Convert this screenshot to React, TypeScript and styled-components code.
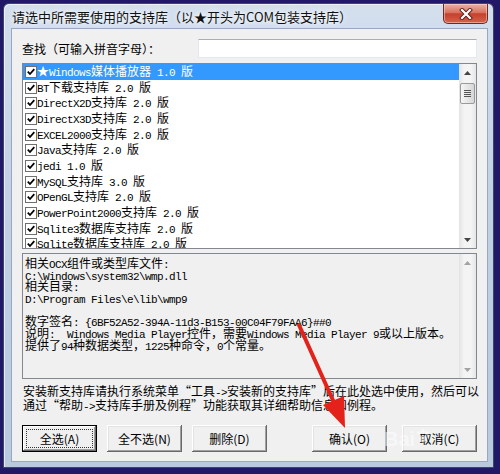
import React from "react";
import styled, { createGlobalStyle } from "styled-components";

const GlobalStyle = createGlobalStyle`
  html, body { margin: 0; padding: 0; }
  body {
    background: #211968;
    width: 500px;
    height: 474px;
    overflow: hidden;
    font-family: "Noto Sans CJK SC", "Noto Sans", sans-serif;
  }
`;

const items = [
  "★Windows媒体播放器 1.0 版",
  "BT下载支持库 2.0 版",
  "DirectX2D支持库 2.0 版",
  "DirectX3D支持库 2.0 版",
  "EXCEL2000支持库 2.0 版",
  "Java支持库 2.0 版",
  "jedi 1.0 版",
  "MySQL支持库 3.0 版",
  "OPenGL支持库 2.0 版",
  "PowerPoint2000支持库 2.0 版",
  "Sqlite3数据库支持库 2.0 版",
  "Sqlite数据库支持库 2.0 版",
];

const details = [
  "相关OCX组件或类型库文件:",
  "C:\\Windows\\system32\\wmp.dll",
  "相关目录:",
  "D:\\Program Files\\e\\lib\\wmp9",
  "",
  "数字签名: {6BF52A52-394A-11d3-B153-00C04F79FAA6}##0",
  "说明:  Windows Media Player控件，需要Windows Media Player 9或以上版本。",
  "提供了94种数据类型，1225种命令，0个常量。",
];

// ascii runs go in a mono face squeezed to 6px a char, like NSimSun's half-width glyphs
const Latin = styled.span`
  font-family: "Liberation Mono", monospace;
  font-size: 11px;
  letter-spacing: -0.6px;
`;

const Mixed = ({ text }: { text: string }) => {
  const runs = text.match(/[\x20-\x7e]+|[^\x20-\x7e]+/g) ?? [];
  return (
    <>
      {runs.map((run, i) =>
        /^[\x20-\x7e]/.test(run) ? <Latin key={i}>{run}</Latin> : <span key={i}>{run}</span>
      )}
    </>
  );
};

const Page = styled.div`
  position: relative;
  box-sizing: border-box;
  width: 500px;
  height: 474px;
  padding: 3px 6px 6px 3px;
  background: #211968;
`;

const Window = styled.div`
  box-sizing: border-box;
  height: 100%;
  display: flex;
  flex-direction: column;
  padding: 0 5px 5px 7px;
  border: 1px solid #3b4868;
  border-radius: 6px 6px 0 0;
  background: linear-gradient(180deg, #d3dfed 0%, #c2d1e4 40%, #b9c9de 100%);
  box-shadow: inset 1px 1px 0 rgba(255, 255, 255, 0.6);
`;

const TitleBar = styled.div`
  height: 28px;
  display: flex;
  justify-content: space-between;
  align-items: flex-start;
`;

const Title = styled.div`
  padding: 5px 0 0 1px;
  font-size: 13px;
  line-height: 16px;
  color: #111;
  white-space: nowrap;
  text-shadow: 0 0 8px #ffffff, 0 0 4px #ffffff;
`;

const CloseButton = styled.div`
  box-sizing: border-box;
  width: 45px;
  height: 20px;
  display: flex;
  align-items: center;
  justify-content: center;
  border: 1px solid #6a2b24;
  border-top: none;
  border-radius: 0 0 5px 5px;
  background: linear-gradient(180deg, #eab3a5 0%, #d8725e 45%, #c4412d 52%, #d4644c 100%);
  box-shadow: inset 0 0 0 1px rgba(255, 220, 210, 0.5);
`;

const Client = styled.div`
  flex: 1;
  display: flex;
  flex-direction: column;
  padding: 10px 10px 9px 10px;
  border: 1px solid #97a8c0;
  background: #f0f0f0;
  font-size: 12px;
  color: #000;
`;

const SearchRow = styled.div`
  height: 19px;
  display: flex;
  justify-content: space-between;
  align-items: center;
`;

const Label = styled.span`
  font-size: 12px;
  line-height: 19px;
`;

const SearchInput = styled.div`
  box-sizing: border-box;
  width: 279px;
  height: 19px;
  background: #fff;
  border: 1px solid #e3e9ef;
  border-top-color: #abadb3;
`;

const Box = styled.div<{ $height: number; $gray?: boolean }>`
  box-sizing: border-box;
  height: ${(p) => p.$height}px;
  display: flex;
  border: 1px solid #828790;
  background: ${(p) => (p.$gray ? "#f0f0f0" : "#ffffff")};
  overflow: hidden;
`;

const ListBox = styled(Box)`
  margin-top: 5px;
`;

const DetailBox = styled(Box)`
  margin-top: 4px;
`;

const Rows = styled.div`
  flex: 1;
  overflow: hidden;
`;

const Row = styled.div<{ $selected?: boolean }>`
  height: 15.7px;
  display: flex;
  align-items: center;
  padding-left: 2px;
  white-space: pre;
  font-size: 12px;
  background: ${(p) => (p.$selected ? "#3399ff" : "transparent")};
  color: ${(p) => (p.$selected ? "#ffffff" : "#000000")};
`;

const RowText = styled.span`
  line-height: 15px;
`;

const Check = styled.span`
  box-sizing: border-box;
  width: 12px;
  height: 12px;
  flex: none;
  display: flex;
  align-items: center;
  justify-content: center;
  background: #fff;
  border: 1px solid #6f6f6f;
`;

const ScrollBar = styled.div`
  width: 17px;
  flex: none;
  display: flex;
  flex-direction: column;
  background: linear-gradient(90deg, #e3e3e3 0%, #f4f4f4 30%, #f4f4f4 70%, #e6e6e6 100%);
`;

const ScrollArrow = styled.div`
  height: 17px;
  display: flex;
  align-items: center;
  justify-content: center;
`;

const Thumb = styled.div`
  box-sizing: border-box;
  height: 21px;
  margin: 2px 1px 0;
  display: flex;
  align-items: center;
  justify-content: center;
  border: 1px solid #9a9a9a;
  border-radius: 2px;
  background: linear-gradient(90deg, #f5f5f5 0%, #e6e6e6 50%, #d6d6d6 100%);
`;

const Track = styled.div`
  flex: 1;
`;

const DetailText = styled.div`
  flex: 1;
  padding: 3px 2px 0;
  font-size: 12px;
  line-height: 11.7px;
  white-space: pre;
`;

const Line = styled.div`
  height: 11.7px;
`;

const Hint = styled.div`
  margin-top: 6px;
  padding-left: 1px;
  font-size: 12px;
  line-height: 12px;
  white-space: pre;
`;

const ButtonRow = styled.div`
  margin-top: 12px;
  display: flex;
  justify-content: space-between;
`;

const ButtonGroup = styled.div<{ $gap: number }>`
  display: flex;
  gap: ${(p) => p.$gap}px;
`;

const Button = styled.div<{ $focused?: boolean }>`
  position: relative;
  box-sizing: border-box;
  width: 75px;
  height: 27px;
  display: flex;
  align-items: center;
  justify-content: center;
  font-size: 12px;
  color: #000;
  background: #f0f0f0;
  box-shadow: ${(p) =>
    p.$focused
      ? "inset 0 0 0 1px #000, inset -2px -2px #696969, inset 2px 2px #fff, inset -3px -3px #a0a0a0"
      : "inset -1px -1px #696969, inset 1px 1px #fff, inset -2px -2px #a0a0a0, inset 2px 2px #e3e3e3"};

  &::after {
    content: "";
    display: ${(p) => (p.$focused ? "block" : "none")};
    position: absolute;
    inset: 4px;
    border: 1px dotted #333;
  }
`;

const Overlay = styled.svg`
  position: absolute;
  left: 0;
  top: 0;
  pointer-events: none;
`;

const Watermark = styled.div`
  position: absolute;
  left: 384px;
  top: 428px;
  display: flex;
  align-items: flex-start;
  font-family: "Liberation Sans", sans-serif;
  font-size: 20px;
  font-weight: 700;
  color: rgba(255, 255, 255, 0.5);
  pointer-events: none;
`;

const Arrow = ({ up, disabled }: { up: boolean; disabled?: boolean }) => (
  <svg width="7" height="4" viewBox="0 0 7 4">
    <path d={up ? "M0 4 L3.5 0 L7 4 Z" : "M0 0 L3.5 4 L7 0 Z"} fill={disabled ? "#a3a3a3" : "#444"} />
  </svg>
);

const Scroll = ({ thumb, disabled }: { thumb?: boolean; disabled?: boolean }) => (
  <ScrollBar>
    <ScrollArrow>
      <Arrow up disabled={disabled} />
    </ScrollArrow>
    {thumb && (
      <Thumb>
        <svg width="7" height="7" viewBox="0 0 7 7">
          <path d="M0 0.5H7M0 2.5H7M0 4.5H7M0 6.5H7" stroke="#555" strokeWidth="1" />
        </svg>
      </Thumb>
    )}
    <Track />
    <ScrollArrow>
      <Arrow up={false} disabled={disabled} />
    </ScrollArrow>
  </ScrollBar>
);

const CheckMark = () => (
  <svg width="8" height="8" viewBox="0 0 8 8">
    <path d="M0.8 3.6 L3 6 L7.3 1.2" fill="none" stroke="#000" strokeWidth="1.8" />
  </svg>
);

export default function App() {
  return (
    <Page>
      <GlobalStyle />
      <Window>
        <TitleBar>
          <Title>请选中所需要使用的支持库（以★开头为COM包装支持库）</Title>
          <CloseButton>
            <svg width="14" height="12" viewBox="0 0 14 12">
              <path d="M3 2 L11 10 M11 2 L3 10" stroke="#5a1d16" strokeWidth="4" strokeLinecap="square" />
              <path d="M3 2 L11 10 M11 2 L3 10" stroke="#fff" strokeWidth="2.2" strokeLinecap="square" />
            </svg>
          </CloseButton>
        </TitleBar>
        <Client>
          <SearchRow>
            <Label>查找（可输入拼音字母）：</Label>
            <SearchInput />
          </SearchRow>
          <ListBox $height={186}>
            <Rows>
              {items.map((item, i) => (
                <Row key={item} $selected={i === 0}>
                  <Check>
                    <CheckMark />
                  </Check>
                  <RowText>
                    <Mixed text={item} />
                  </RowText>
                </Row>
              ))}
            </Rows>
            <Scroll thumb />
          </ListBox>
          <DetailBox $height={126} $gray>
            <DetailText>
              {details.map((line, i) => (
                <Line key={i}>
                  <Mixed text={line} />
                </Line>
              ))}
            </DetailText>
            <Scroll disabled />
          </DetailBox>
          <Hint>
            <div>
              <Mixed text="安装新支持库请执行系统菜单“工具->安装新的支持库”后在此处选中使用，然后可以" />
            </div>
            <div>
              <Mixed text="通过“帮助->支持库手册及例程”功能获取其详细帮助信息和例程。" />
            </div>
          </Hint>
          <ButtonRow>
            <ButtonGroup $gap={10}>
              <Button $focused>全选(A)</Button>
              <Button>全不选(N)</Button>
              <Button>删除(D)</Button>
            </ButtonGroup>
            <ButtonGroup $gap={15}>
              <Button>确认(O)</Button>
              <Button>取消(C)</Button>
            </ButtonGroup>
          </ButtonRow>
        </Client>
      </Window>
      <Watermark>
        Bai
        <svg width="16" height="16" viewBox="0 0 16 16">
          <circle cx="4" cy="5" r="2" fill="rgba(255,255,255,0.5)" />
          <circle cx="8" cy="3" r="2" fill="rgba(255,255,255,0.5)" />
          <circle cx="12" cy="5" r="2" fill="rgba(255,255,255,0.5)" />
          <ellipse cx="8" cy="11" rx="4" ry="3.5" fill="rgba(255,255,255,0.5)" />
        </svg>
      </Watermark>
      <Overlay width="500" height="474" viewBox="0 0 500 474">
        <path d="M299 325 L336 407" stroke="#e3231b" strokeWidth="4" strokeLinecap="round" />
        <path d="M345 428 L323 405 L344 396 Z" fill="#e3231b" />
      </Overlay>
    </Page>
  );
}
